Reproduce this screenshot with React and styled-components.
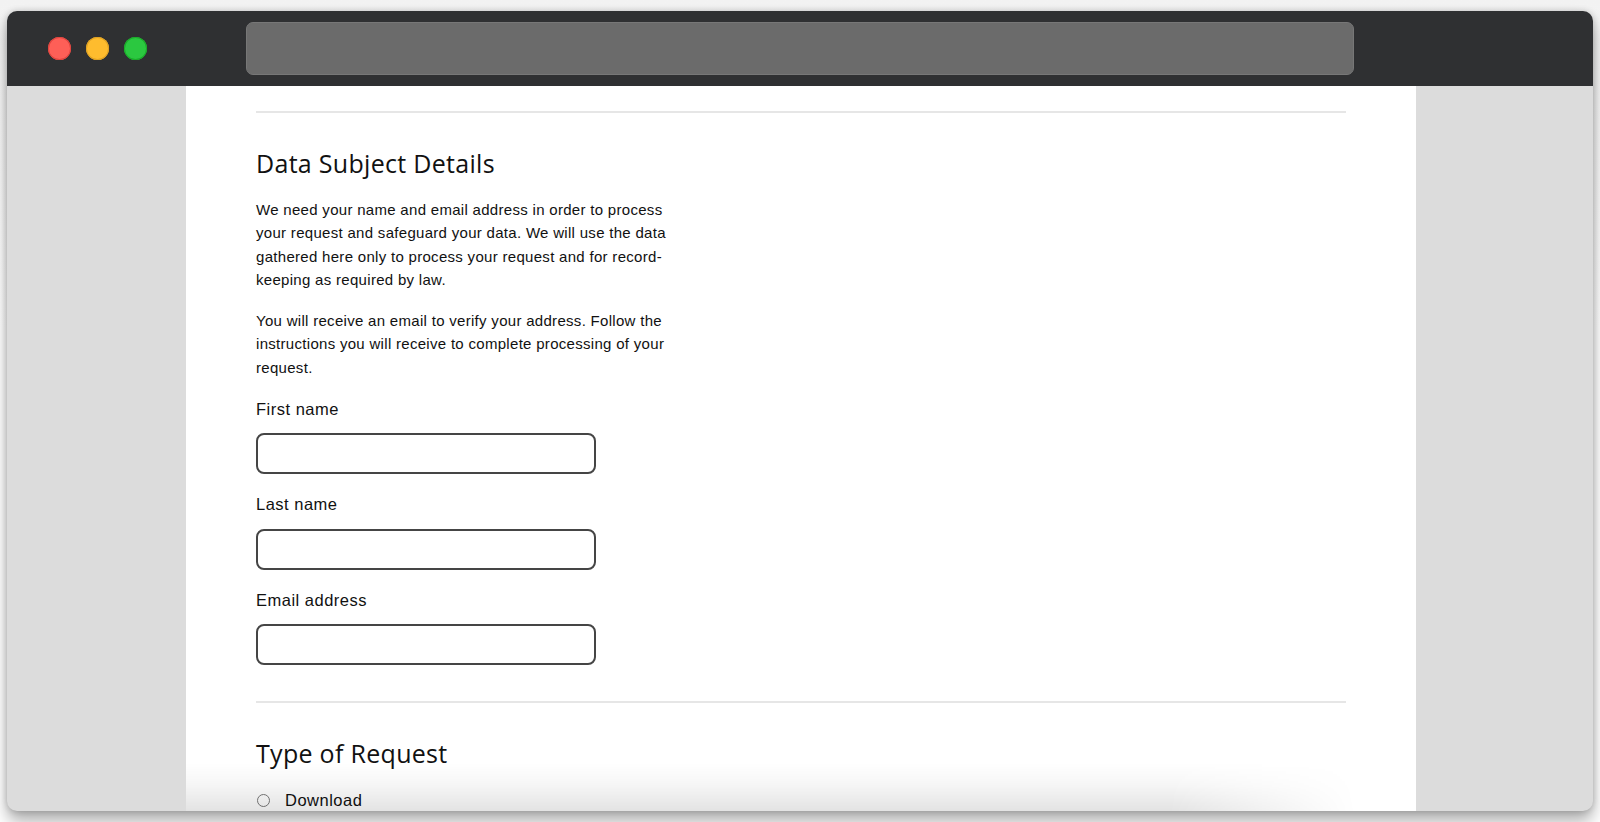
import styled, { createGlobalStyle } from "styled-components";

const GlobalStyle = createGlobalStyle`
  html, body {
    margin: 0;
    padding: 0;
    background: #ffffff;
  }

  * {
    box-sizing: border-box;
  }
`;

const Desktop = styled.div`
  width: 1600px;
  height: 822px;
  padding: 11px 7px 11px 7px;
  background: linear-gradient(#f2f2f2, #ffffff 40%);
  overflow: hidden;
`;

const Window = styled.div`
  display: flex;
  flex-direction: column;
  height: 800px;
  border-radius: 10px;
  overflow: hidden;
  background: #dcdcdc;
  box-shadow: 0 0 6px rgba(0, 0, 0, 0.18), 0 10px 16px rgba(0, 0, 0, 0.32);
`;

const TitleBar = styled.header`
  display: flex;
  align-items: center;
  flex: none;
  height: 75px;
  padding-left: 41px;
  background: #2f3032;
`;

const Lights = styled.div`
  display: flex;
  gap: 15px;
`;

const Light = styled.span`
  width: 23px;
  height: 23px;
  border-radius: 50%;
  background: ${(p) => p.$color};
  box-shadow: inset 0 0 0 1px ${(p) => p.$edge};
`;

const UrlBar = styled.div`
  width: 1108px;
  height: 53px;
  margin-left: 99px;
  border-radius: 7px;
  background: #6b6b6b;
  border: 1px solid #777777;
`;

const Viewport = styled.main`
  display: flex;
  flex: 1;
  min-height: 0;
  padding-left: 179px;
`;

const Page = styled.div`
  position: relative;
  width: 1230px;
  padding: 25px 70px 0;
  background: #ffffff;
  overflow: hidden;

  /* shade of the sticky footer coming up from below */
  &::after {
    content: "";
    position: absolute;
    left: 0;
    bottom: 0;
    width: 1170px;
    height: 48px;
    background: linear-gradient(
      rgba(0, 0, 0, 0),
      rgba(0, 0, 0, 0.035) 45%,
      rgba(0, 0, 0, 0.11)
    );
    -webkit-mask-image: linear-gradient(to right, #000 84%, transparent 100%);
    mask-image: linear-gradient(to right, #000 84%, transparent 100%);
    pointer-events: none;
  }
`;

const Rule = styled.hr`
  margin: 0;
  border: 0;
  height: 2px;
  background: #e6e6e6;
`;

const Section = styled.section`
  padding-bottom: ${(p) => p.$bottom || 0}px;
`;

const Heading = styled.h2`
  margin: 34px 0 0;
  font-family: "Open Sans", "Liberation Sans", sans-serif;
  font-weight: 400;
  font-size: 25px;
  letter-spacing: 0.3px;
  line-height: 32px;
  color: #111111;
`;

const Intro = styled.div`
  width: 425px;
  margin-top: 19px;

  p {
    margin: 0 0 18px;
    font-family: "Liberation Sans", Arial, sans-serif;
    font-size: 15px;
    letter-spacing: 0.3px;
    line-height: 23.25px;
    color: #111111;
  }

  p:last-child {
    margin-bottom: 0;
  }
`;

const Fields = styled.div`
  display: flex;
  flex-direction: column;
  gap: 20px;
  margin-top: 20px;
`;

const Field = styled.label`
  display: flex;
  flex-direction: column;
  gap: 14.5px;
`;

const LabelText = styled.span`
  font-family: "Liberation Sans", Arial, sans-serif;
  font-size: 16.5px;
  letter-spacing: 0.5px;
  line-height: 20px;
  color: #111111;
`;

const Input = styled.input`
  width: 340px;
  height: 41px;
  padding: 0 12px;
  border: 2px solid #454545;
  border-radius: 8px;
  background: #ffffff;
  font-family: "Liberation Sans", Arial, sans-serif;
  font-size: 16px;
  outline: none;
`;

const Options = styled.div`
  display: flex;
  flex-direction: column;
  margin-top: 21px;
`;

const Option = styled.label`
  display: flex;
  align-items: center;
  gap: 15px;
  height: 20px;
  padding-left: 1px;
`;

const Radio = styled.span`
  width: 13px;
  height: 13px;
  border-radius: 50%;
  border: 1px solid #7a7a7a;
  background: #ffffff;
`;

const fields = ["First name", "Last name", "Email address"];

export default function App() {
  return (
    <>
      <GlobalStyle />
      <Desktop>
        <Window>
          <TitleBar>
            <Lights>
              <Light $color="#fe5f57" $edge="#e0443e" />
              <Light $color="#febc2e" $edge="#dea123" />
              <Light $color="#2bc840" $edge="#1aab29" />
            </Lights>
            <UrlBar />
          </TitleBar>

          <Viewport>
            <Page>
              <Rule />
              <Section $bottom={36}>
                <Heading>Data Subject Details</Heading>
                <Intro>
                  <p>
                    We need your name and email address in order to process
                    your request and safeguard your data. We will use the data
                    gathered here only to process your request and for
                    record-keeping as required by law.
                  </p>
                  <p>
                    You will receive an email to verify your address. Follow
                    the instructions you will receive to complete processing of
                    your request.
                  </p>
                </Intro>
                <Fields>
                  {fields.map((name) => (
                    <Field key={name}>
                      <LabelText>{name}</LabelText>
                      <Input type="text" />
                    </Field>
                  ))}
                </Fields>
              </Section>

              <Rule />
              <Section>
                <Heading>Type of Request</Heading>
                <Options>
                  <Option>
                    <Radio />
                    <LabelText>Download</LabelText>
                  </Option>
                </Options>
              </Section>
            </Page>
          </Viewport>
        </Window>
      </Desktop>
    </>
  );
}
